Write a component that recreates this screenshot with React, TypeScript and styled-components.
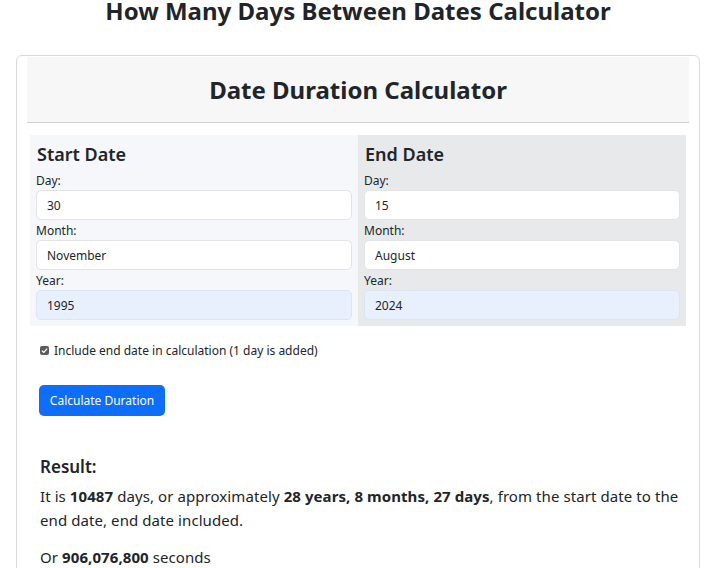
import React from "react";
import styled, { createGlobalStyle } from "styled-components";

const Global = createGlobalStyle`
  html, body { margin: 0; padding: 0; background: #fff; }
  body {
    font-family: "Noto Sans", "Open Sans", sans-serif;
    color: #212529;
    overflow: hidden;
  }
  * { box-sizing: border-box; }
`;

const Page = styled.div`
  width: 708px;
  padding: 0 8px 0 16px;
`;

const Title = styled.h1`
  margin: -4px 0 0 0;
  text-align: center;
  font-size: 24px;
  font-weight: 700;
  line-height: 30px;
`;

const Card = styled.div`
  margin-top: 29px;
  border: 1px solid #d9d9d9;
  border-radius: 6px;
  padding: 1px 10px 0 10px;
  height: 560px;
`;

const Header = styled.div`
  background: #f7f7f7;
  border-bottom: 1px solid #cfcfcf;
  height: 66px;
  display: flex;
  align-items: center;
  justify-content: center;
`;

const HeaderTitle = styled.h2`
  margin: 0;
  font-size: 24px;
  font-weight: 700;
`;

const Columns = styled.div`
  margin: 12px 3px 0 3px;
  display: grid;
  grid-template-columns: 1fr 1fr;
`;

const Column = styled.div<{ $bg: string }>`
  background: ${(p) => p.$bg};
  padding: 4px 6px 6px 6px;
`;

const ColTitle = styled.h3`
  margin: 0 0 3px 1px;
  font-size: 18px;
  font-weight: 600;
  line-height: 30px;
`;

const Label = styled.label`
  display: block;
  font-size: 12px;
  line-height: 18px;
  margin: 2px 0 0 0;
  color: #212529;
`;

const Input = styled.div<{ $auto?: boolean }>`
  height: 30px;
  border: 1px solid ${(p) => (p.$auto ? "#dde5f3" : "#e3e3e3")};
  border-radius: 5px;
  background: ${(p) => (p.$auto ? "#e8f0fe" : "#fff")};
  font-size: 12px;
  display: flex;
  align-items: center;
  padding-left: 10px;
`;

const CheckRow = styled.div`
  margin: 16px 0 0 13px;
  display: flex;
  align-items: center;
  gap: 5px;
  font-size: 12px;
`;

const Check = styled.span`
  width: 9px;
  height: 9px;
  border-radius: 2px;
  background: #5c5c5c;
  display: inline-flex;
  align-items: center;
  justify-content: center;
`;

const Button = styled.button`
  margin: 26px 0 0 12px;
  height: 31px;
  width: 126px;
  background: #0d6efd;
  border: none;
  border-radius: 5px;
  color: #fff;
  font-family: inherit;
  font-size: 12px;
  display: block;
`;

const Result = styled.div`
  margin: 39px 0 0 13px;
`;

const ResultTitle = styled.h4`
  margin: 0 0 5px 0;
  font-size: 17px;
  font-weight: 600;
  line-height: 24px;
`;

const Para = styled.p`
  margin: 0 0 13px 0;
  font-size: 15px;
  line-height: 24px;
  letter-spacing: 0.08px;
`;

function Field({ label, value, auto }: { label: string; value: string; auto?: boolean }) {
  return (
    <>
      <Label>{label}</Label>
      <Input $auto={auto}>{value}</Input>
    </>
  );
}

export default function App() {
  return (
    <Page>
      <Global />
      <Title>How Many Days Between Dates Calculator</Title>
      <Card>
        <Header>
          <HeaderTitle>Date Duration Calculator</HeaderTitle>
        </Header>
        <Columns>
          <Column $bg="#f5f7fa">
            <ColTitle>Start Date</ColTitle>
            <Field label="Day:" value="30" />
            <Field label="Month:" value="November" />
            <Field label="Year:" value="1995" auto />
          </Column>
          <Column $bg="#e8e9eb">
            <ColTitle>End Date</ColTitle>
            <Field label="Day:" value="15" />
            <Field label="Month:" value="August" />
            <Field label="Year:" value="2024" auto />
          </Column>
        </Columns>
        <CheckRow>
          <Check>
            <svg width="7" height="7" viewBox="0 0 8 8">
              <path d="M1 4.2 L3.2 6.2 L7 1.8" stroke="#fff" strokeWidth="1.4" fill="none" />
            </svg>
          </Check>
          Include end date in calculation (1 day is added)
        </CheckRow>
        <Button>Calculate Duration</Button>
        <Result>
          <ResultTitle>Result:</ResultTitle>
          <Para>
            It is <b>10487</b> days, or approximately <b>28 years, 8 months, 27 days</b>, from the start date to the end date, end date included.
          </Para>
          <Para>
            Or <b>906,076,800</b> seconds
          </Para>
        </Result>
      </Card>
    </Page>
  );
}
